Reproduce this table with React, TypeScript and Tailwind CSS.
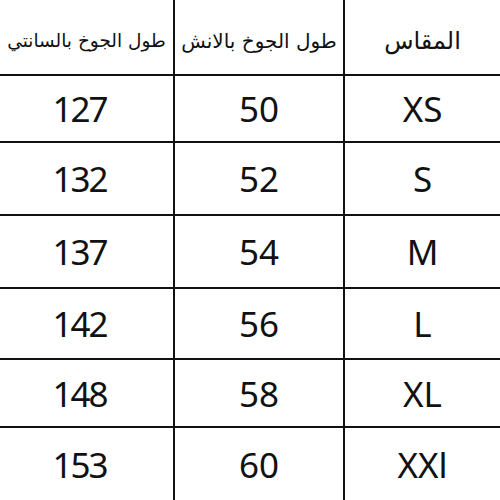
import React from "react";

const rows: [string, string, string, string][] = [
  ["127", "50", "XS", "h-[67px]"],
  ["132", "52", "S", "h-[73px]"],
  ["137", "54", "M", "h-[73px]"],
  ["142", "56", "L", "h-[71px]"],
  ["148", "58", "XL", "h-[68px]"],
  ["153", "60", "XXl", "h-[72px]"],
];

const num = "font-['Noto_Sans',sans-serif] font-normal text-[35px] leading-none text-[#111]";
const ar = "font-['DejaVu_Sans','Noto_Sans',sans-serif] leading-none text-[#111] pt-[8px]";

export default function App() {
  return (
    <div className="w-[500px] h-[500px] bg-white flex flex-col overflow-hidden">
      <div className="flex h-[76px] shrink-0 border-b-2 border-[#111]">
        <div dir="rtl" className={`w-[175px] shrink-0 flex items-center justify-center border-r-2 border-[#111] text-[18.5px] ${ar}`}>
          طول الجوخ بالسانتي
        </div>
        <div dir="rtl" className={`w-[170px] shrink-0 flex items-center justify-center border-r-2 border-[#111] text-[20px] ${ar}`}>
          طول الجوخ بالانش
        </div>
        <div dir="rtl" className={`flex-1 flex items-center justify-center text-[24px] ${ar}`}>
          المقاس
        </div>
      </div>
      {rows.map(([a, b, c, h], i) => (
        <div key={a} className={`flex shrink-0 ${h} ${i < rows.length - 1 ? "border-b-2 border-[#111]" : ""}`}>
          <div className={`w-[175px] shrink-0 flex items-center justify-center pr-[14px] tracking-[-2px] border-r-2 border-[#111] ${num}`}>
            {a}
          </div>
          <div className={`w-[170px] shrink-0 flex items-center justify-center border-r-2 border-[#111] ${num}`}>
            {b}
          </div>
          <div className={`flex-1 flex items-center justify-center ${num}`}>{c}</div>
        </div>
      ))}
    </div>
  );
}
